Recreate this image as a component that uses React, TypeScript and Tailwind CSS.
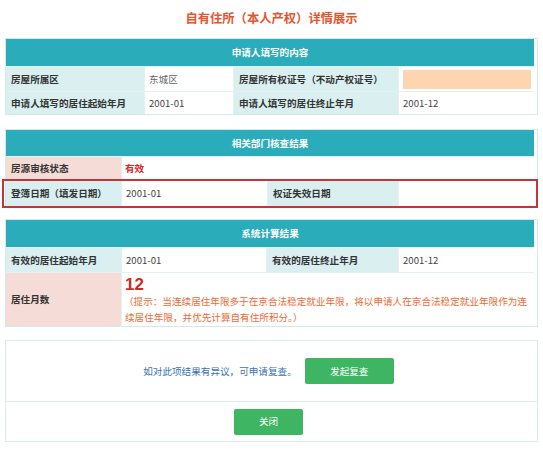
const font = { fontFamily: '"Noto Sans CJK SC", "Noto Sans", sans-serif' };

function Header({ title }: { title: string }) {
  return (
    <div className="col-span-4 flex items-center justify-center bg-[#2aacba] text-[9.6px] font-bold text-white">
      {title}
    </div>
  );
}

function Label({ children, pink }: { children: React.ReactNode; pink?: boolean }) {
  return (
    <div
      className={
        "flex items-center border-t border-r border-[#e4f1f1] pl-[5px] text-[9.6px] font-bold text-[#333] " +
        (pink ? "bg-[#f6dcd6]" : "bg-[#d9eff0]")
      }
    >
      {children}
    </div>
  );
}

function Value({ children, last }: { children?: React.ReactNode; last?: boolean }) {
  return (
    <div
      className={
        "flex items-center border-t border-[#e4f1f1] bg-white pl-[4px] text-[9.6px] text-[#444] " +
        (last ? "" : "border-r")
      }
    >
      {children}
    </div>
  );
}

export default function App() {
  return (
    <div className="min-h-[460px] w-[543px] bg-white" style={font}>
      <div className="flex h-[38px] items-center justify-center pb-[1px] text-[12.3px] font-bold text-[#e4552d]">
        自有住所（本人产权）详情展示
      </div>

      <div className="mx-[5px] grid grid-cols-[139px_89px_165px_135px] grid-rows-[27px_25px_23px] border border-[#d3eaeb]">
        <Header title="申请人填写的内容" />
        <Label>房屋所属区</Label>
        <Value>
          <span className="text-[#666]">东城区</span>
        </Value>
        <Label>房屋所有权证号（不动产权证号）</Label>
        <Value last>
          <div className="mr-[3px] h-[19px] w-full bg-[#fdd5b1]" />
        </Value>
        <Label>申请人填写的居住起始年月</Label>
        <Value>2001-01</Value>
        <Label>申请人填写的居住终止年月</Label>
        <Value last>2001-12</Value>
      </div>

      <div className="mx-[5px] mt-[14px] grid grid-cols-[116px_146px_131px_135px] grid-rows-[26px_24px_26px] border border-[#d3eaeb]">
        <Header title="相关部门核查结果" />
        <Label pink>房源审核状态</Label>
        <div className="col-span-3 flex items-center border-t border-[#e4f1f1] bg-white pl-[3px] text-[9.6px] font-bold text-[#d8261d]">
          有效
        </div>
        <div className="relative col-span-4 grid grid-cols-[116px_146px_131px_135px]">
          <Label>登簿日期（填发日期）</Label>
          <Value>2001-01</Value>
          <Label>权证失效日期</Label>
          <Value last />
          <div className="pointer-events-none absolute -top-[1px] -bottom-[2px] -left-[4px] -right-[4px] border-2 border-[#c4343a]" />
        </div>
      </div>

      <div className="mx-[5px] mt-[12px] grid grid-cols-[116px_145px_132px_135px] grid-rows-[27px_25px_54px] border border-[#d3eaeb]">
        <Header title="系统计算结果" />
        <Label>有效的居住起始年月</Label>
        <Value>2001-01</Value>
        <Label>有效的居住终止年月</Label>
        <Value last>2001-12</Value>
        <Label pink>居住月数</Label>
        <div className="col-span-3 flex flex-col border-t border-[#e4f1f1] bg-white pl-[3px] pt-[4px]">
          <div className="text-[17px] font-bold leading-[16px] text-[#d8261d]" style={{ fontFamily: '"Liberation Sans", Arial, sans-serif' }}>
            12
          </div>
          <div className="text-[9.6px] leading-[16px] whitespace-nowrap text-[#ee6a35]">
            <div className="-ml-[1px]">（提示：当连续居住年限多于在京合法稳定就业年限，将以申请人在京合法稳定就业年限作为连</div>
            <div>续居住年限，并优先计算自有住所积分。）</div>
          </div>
        </div>
      </div>

      <div className="mx-[5px] mt-[13px] flex flex-col border border-[#dcecea]">
        <div className="flex h-[60px] items-center justify-center gap-[8px] pr-[6px]">
          <span className="text-[9.6px] text-[#3a72b5]">如对此项结果有异议，可申请复查。</span>
          <button className="flex h-[26px] w-[89px] items-center justify-center rounded-[2px] bg-[#3db562] text-[9.6px] text-white">
            发起复查
          </button>
        </div>
        <div className="flex h-[40px] items-center justify-center border-t border-[#dcecea] pr-[6px]">
          <button className="flex h-[26px] w-[69px] items-center justify-center rounded-[2px] bg-[#3db562] text-[9.6px] text-white">
            关闭
          </button>
        </div>
      </div>
    </div>
  );
}
